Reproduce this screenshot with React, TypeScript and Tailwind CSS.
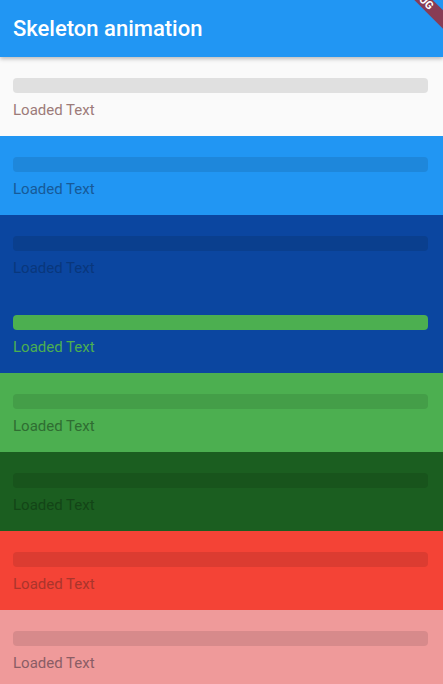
const ROWS = [
  { bg: "bg-[#fafafa]", bar: "bg-[#e0e0e0]", text: "text-[#9c7b79]" },
  { bg: "bg-[#2196f3]", bar: "bg-[#1e87db]", text: "text-[#175a98]" },
  { bg: "bg-[#0b46a0]", bar: "bg-[#0a3f8e]", text: "text-[#09377c]" },
  { bg: "bg-[#0b46a0]", bar: "bg-[#4caf50]", text: "text-[#4caf50]" },
  { bg: "bg-[#4caf50]", bar: "bg-[#449e48]", text: "text-[#2f6d32]" },
  { bg: "bg-[#1b5e20]", bar: "bg-[#18541c]", text: "text-[#134517]" },
  { bg: "bg-[#f44336]", bar: "bg-[#dc3c31]", text: "text-[#aa352c]" },
  { bg: "bg-[#ef9a9a]", bar: "bg-[#d78a8b]", text: "text-[#8a5d65]" },
];

function SkeletonRow({ bg, bar, text }: { bg: string; bar: string; text: string }) {
  return (
    <div className={`h-[79px] pl-[13px] pr-[15px] pt-[21px] ${bg}`}>
      <div className={`h-[15px] rounded-[4px] ${bar}`} />
      <div className={`mt-[7px] text-[15px] leading-[20px] ${text}`}>Loaded Text</div>
    </div>
  );
}

export default function App() {
  return (
    <div
      className="relative h-[684px] w-[443px] overflow-hidden bg-[#fafafa]"
      style={{ fontFamily: "Roboto, 'Noto Sans', sans-serif" }}
    >
      <header className="relative z-10 flex h-[57px] items-center bg-[#2196f3] px-[13px] shadow-[0_2px_4px_rgba(0,0,0,0.25)]">
        <h1 className="text-[22px] font-medium leading-none text-white">Skeleton animation</h1>
      </header>
      {ROWS.map((r, i) => (
        <SkeletonRow key={i} {...r} />
      ))}
      {/* debug banner, mostly clipped by the corner */}
      <div className="absolute right-[-36px] top-[-11.5px] z-20 h-[13px] w-[120px] rotate-45 bg-[#883c55] text-center text-[11px] font-bold leading-[13px] text-white">
        DEBUG
      </div>
    </div>
  );
}
